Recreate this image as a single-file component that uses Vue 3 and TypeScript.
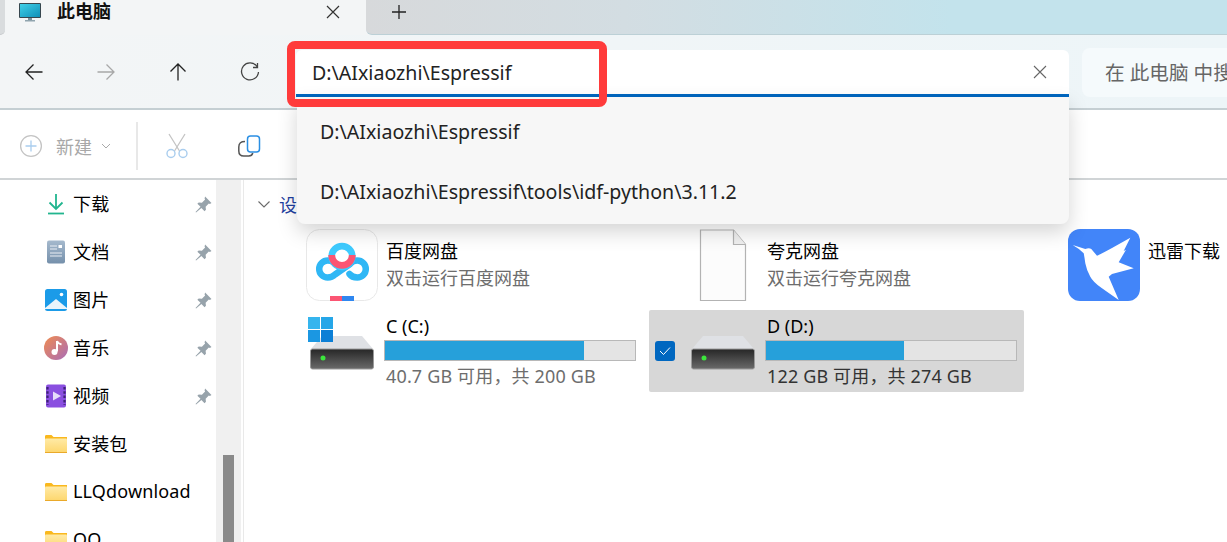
<template>
  <div class="window">
    <div class="tabstrip">
      <div class="tab-edge"></div>
      <div class="tab">
        <svg class="tab-icon" width="24" height="22" viewBox="0 0 24 22">
          <defs>
            <linearGradient id="screen" x1="0" y1="0" x2="1" y2="1">
              <stop offset="0" stop-color="#3fd0e8" />
              <stop offset="1" stop-color="#0f8fb8" />
            </linearGradient>
          </defs>
          <rect x="1" y="2" width="22" height="15" rx="1" fill="#37474f" />
          <rect x="2" y="3" width="20" height="13" fill="url(#screen)" />
          <rect x="10" y="17" width="4" height="2" fill="#78909c" />
          <rect x="7" y="19" width="10" height="1.5" fill="#90a4ae" />
        </svg>
        <span class="tab-title">此电脑</span>
        <svg class="tab-close" width="14" height="14" viewBox="0 0 14 14">
          <path d="M1 1l12 12M13 1L1 13" stroke="#333" stroke-width="1.2" fill="none" />
        </svg>
      </div>
      <div class="strip">
        <svg width="16" height="16" viewBox="0 0 16 16">
          <path d="M8 1v14M1 8h14" stroke="#222" stroke-width="1.3" fill="none" />
        </svg>
      </div>
    </div>

    <div class="navbar">
      <div class="nav-buttons">
        <button v-for="n in navIcons" :key="n.id" class="nav-btn">
          <svg width="20" height="20" viewBox="0 0 20 20">
            <path :d="n.d" :stroke="n.color" stroke-width="1.3" fill="none" />
          </svg>
        </button>
      </div>
      <div class="address">
        <span class="address-text">D:\AIxiaozhi\Espressif</span>
        <svg class="address-clear" width="14" height="14" viewBox="0 0 14 14">
          <path d="M1 1l12 12M13 1L1 13" stroke="#666" stroke-width="1.1" fill="none" />
        </svg>
      </div>
      <div class="search">在 此电脑 中搜索</div>
    </div>

    <div class="commands">
      <div class="cmd-new">
        <svg width="24" height="24" viewBox="0 0 24 24">
          <circle cx="12" cy="12" r="10.4" fill="none" stroke="#c4c4c4" stroke-width="1.3" />
          <path d="M12 6.5v11M6.5 12h11" stroke="#a9cdee" stroke-width="1.3" fill="none" />
        </svg>
        <span>新建</span>
        <svg width="10" height="6" viewBox="0 0 10 6">
          <path d="M1 1l4 4 4-4" stroke="#aaa" stroke-width="1" fill="none" />
        </svg>
      </div>
      <div class="cmd-sep"></div>
      <svg class="cmd-cut" width="24" height="26" viewBox="0 0 24 26">
        <path d="M4 1l10.500 17M20 1L9.500 18" stroke="#c4c4c4" stroke-width="1.300" fill="none" />
        <circle cx="6" cy="20.500" r="4" fill="none" stroke="#a9cdee" stroke-width="1.400" />
        <circle cx="18" cy="20.500" r="4" fill="none" stroke="#a9cdee" stroke-width="1.400" />
      </svg>
      <svg class="cmd-copy" width="24" height="24" viewBox="0 0 24 24">
        <path d="M7 7.500C3 7.500.8 9 .8 13v4c0 3 2 5 5 5h5c2 0 3.500-1 4-3" stroke="#555" stroke-width="1.500" fill="none" />
        <rect x="9.500" y="2" width="12" height="16" rx="3" fill="#fff" stroke="#2b8fe3" stroke-width="1.500" />
      </svg>
    </div>

    <div class="main">
      <aside class="sidebar">
        <ul class="tree">
          <li v-for="item in places" :key="item.label" class="tree-row">
            <svg class="tree-icon" width="24" height="24" viewBox="0 0 24 24">
              <defs>
                <linearGradient id="musicFill" x1="0" y1="0" x2="1" y2="1">
                  <stop offset="0" stop-color="#f08c50" />
                  <stop offset="1" stop-color="#a96cb8" />
                </linearGradient>
                <linearGradient id="docFill" x1="0" y1="0" x2="0" y2="1">
                  <stop offset="0" stop-color="#a5b9cd" />
                  <stop offset="1" stop-color="#7590ab" />
                </linearGradient>
                <linearGradient id="folderFill" x1="0" y1="0" x2="0" y2="1">
                  <stop offset="0" stop-color="#ffeaa6" />
                  <stop offset="1" stop-color="#fdd66c" />
                </linearGradient>
              </defs>
              <template v-if="item.kind === 'download'">
                <path d="M12 2v15M5.500 10.500l6.500 6.500 6.500-6.500" stroke="#22b58f" stroke-width="1.800" fill="none" />
                <path d="M4 21.500h16" stroke="#22b58f" stroke-width="1.800" />
              </template>
              <template v-else-if="item.kind === 'doc'">
                <rect x="3" y="0.500" width="18" height="23" rx="2" fill="url(#docFill)" />
                <path d="M6 6h7M6 9h7M6 13h12M6 16h12" stroke="#e9eef3" stroke-width="1.100" />
                <rect x="14.500" y="5" width="3.500" height="3" fill="#fff" />
              </template>
              <template v-else-if="item.kind === 'pic'">
                <rect x="1" y="1" width="22" height="22" rx="2.500" fill="#1b9be8" />
                <circle cx="17.500" cy="6.500" r="1.800" fill="#fff" />
                <path d="M1 20l11-9 11 9v1H1z" fill="#eaf4fb" />
              </template>
              <template v-else-if="item.kind === 'music'">
                <circle cx="12" cy="12" r="12" fill="url(#musicFill)" />
                <path d="M13 5v10.500" stroke="#fff" stroke-width="2" />
                <path d="M13 5c1 2.500 3 3 4.500 3.500" stroke="#fff" stroke-width="2" fill="none" />
                <circle cx="10.500" cy="16" r="3" fill="#fff" />
              </template>
              <template v-else-if="item.kind === 'video'">
                <rect x="2" y="0.500" width="20" height="23" rx="2" fill="#8a4fe0" />
                <path d="M9 7.500l8 4.500-8 4.500z" fill="#e6dcfa" />
                <path d="M3.500 3v18M20.500 3v18" stroke="#3e2277" stroke-width="2.200" stroke-dasharray="2.500 1.800" />
              </template>
              <template v-else>
                <path d="M1 4.500c0-1 .5-1.500 1.500-1.500h5l2 2h13.500v3H1z" fill="#f9b81e" />
                <rect x="1" y="6.500" width="22" height="14.500" rx="1" fill="url(#folderFill)" />
                <path d="M1 20.500h22" stroke="#eaa92a" stroke-width="1" />
              </template>
            </svg>
            <span class="tree-label">{{ item.label }}</span>
            <svg v-if="item.pinned" class="tree-pin" width="17" height="17" viewBox="0 0 16 16">
              <path d="M9.500 0.500l6 6-1.500 1-1-.5-3 3 .3 3-1.300 1.300-3-3L1 15.500l-.5-.5 4.700-4.800-3-3L3.500 6l3 .3 3-3-.5-1z" fill="#97a3ab" />
            </svg>
          </li>
        </ul>
        <div class="scrolltrack"><div class="scrollthumb"></div></div>
      </aside>

      <section class="content">
        <div class="group-head">
          <svg width="12" height="7" viewBox="0 0 12 7">
            <path d="M.5.500l5.500 5.500 5.500-5.500" stroke="#6a6a6a" stroke-width="1.100" fill="none" />
          </svg>
          <span class="group-title">设备和驱动器</span>
        </div>
        <div class="tiles">
          <div class="tile app">
            <svg class="app-icon" width="72" height="72" viewBox="0 0 72 72">
              <rect x="0.500" y="0.500" width="71" height="71" rx="13" fill="#fff" stroke="#e8e8e8" />
              <path d="M43.500 45Q46 48.500 51.300 48.500A8.500 8.500 0 0 0 51.300 31.500Q47 31.500 44 35L29 45.500Q26 48.500 21.700 48.500A8.500 8.500 0 0 1 21.700 31.500Q25 31.500 28 33.500" fill="none" stroke="#2fb7f5" stroke-width="6.500" stroke-linecap="round" />
              <circle cx="36" cy="27.500" r="10.300" fill="none" stroke="#3ecbff" stroke-width="6.700" />
              <path d="M25.700 26A10.300 10.300 0 0 0 46.300 26" fill="none" stroke="#fb5573" stroke-width="6.700" />
              <rect x="24" y="67" width="12" height="5" fill="#fb5573" />
              <rect x="36" y="67" width="12" height="5" fill="#2f87f0" />
            </svg>
            <div class="tile-text">
              <div class="tile-name">百度网盘</div>
              <div class="tile-sub">双击运行百度网盘</div>
            </div>
          </div>
          <div class="tile app">
            <svg class="app-icon" width="72" height="72" viewBox="0 0 72 72">
              <path d="M13.500 1h33l12 14.500v56h-45z" fill="#fcfcfc" stroke="#b3b3b3" stroke-width="1.200" />
              <path d="M46.500 1v14.500h12" fill="#f0f0f0" stroke="#b3b3b3" stroke-width="1.200" />
            </svg>
            <div class="tile-text">
              <div class="tile-name">夸克网盘</div>
              <div class="tile-sub">双击运行夸克网盘</div>
            </div>
          </div>
          <div class="tile app">
            <svg class="app-icon" width="72" height="72" viewBox="0 0 72 72">
              <rect width="72" height="72" rx="12" fill="#4285f9" />
              <path d="M4.700 16L17.300 20Q21 18.500 23.300 20L29 26.700Q35 24 44 19L62.300 8.700L55.700 22L58 20.700L50.700 33.300L65.700 39.300L44 45L40.700 47.700L50.700 71L34 59.300Q25 53 22.300 47.700Q18.500 41 17.300 34.300Q16.500 28 15.700 24.300Q11 19.500 4.700 16z" fill="#fff" />
            </svg>
            <div class="tile-text">
              <div class="tile-name">迅雷下载</div>
            </div>
          </div>

          <div v-for="d in drives" :key="d.label" class="tile drive" :class="{ selected: d.selected }">
            <span v-if="d.selected" class="check">
              <svg width="12" height="10" viewBox="0 0 12 10">
                <path d="M1 5l3.500 3.500L11 1.500" stroke="#fff" stroke-width="1" fill="none" />
              </svg>
            </span>
            <div class="drive-icon">
              <svg width="64" height="36" viewBox="0 0 64 36">
                <defs>
                  <linearGradient :id="'body' + d.label[0]" x1="0" y1="0" x2="0" y2="1">
                    <stop offset="0" stop-color="#262626" />
                    <stop offset="1" stop-color="#6a6a6a" />
                  </linearGradient>
                </defs>
                <path d="M12 1h40l11 13H1z" fill="#dfe1e5" />
                <rect x="0.500" y="14" width="63" height="20" rx="2" :fill="`url(#body${d.label[0]})`" stroke="#9a9a9a" />
                <circle cx="13" cy="23" r="2.500" fill="#3ce63c" />
              </svg>
              <svg v-if="d.system" class="win-logo" width="26" height="26" viewBox="0 0 26 26">
                <rect x="0" y="0" width="12" height="12" fill="#35b5ee" />
                <rect x="13" y="0" width="12" height="12" fill="#25a6e8" />
                <rect x="0" y="13" width="12" height="12" fill="#1b97e2" />
                <rect x="13" y="13" width="12" height="12" fill="#0c7fd6" />
              </svg>
            </div>
            <div class="drive-info">
              <div class="tile-name">{{ d.label }}</div>
              <div class="bar"><div class="bar-fill" :style="{ width: d.used + '%' }"></div></div>
              <div class="tile-sub">{{ d.free }}</div>
            </div>
          </div>
        </div>
      </section>
    </div>

    <!-- 地址栏下拉 -->
    <ul class="suggest">
      <li v-for="s in suggestions" :key="s">{{ s }}</li>
    </ul>
    <!-- 截图上的红框标注 -->
    <div class="mark"></div>
  </div>
</template>

<script setup lang="ts">
interface Place {
  label: string;
  kind: string;
  pinned?: boolean;
}

const navIcons = [
  { id: 'back', d: 'M18.500 10H2M9.500 2.500L2 10l7.500 7.500', color: '#222' },
  { id: 'forward', d: 'M1.500 10H18M10.500 2.500L18 10l-7.500 7.500', color: '#a8a8a8' },
  { id: 'up', d: 'M10 18.500V2M2.500 9.500L10 2l7.500 7.500', color: '#222' },
  { id: 'refresh', d: 'M17 4.500A8.500 8.500 0 1 0 18.500 10M17.500 1v4.500H13', color: '#444' },
];

const places: Place[] = [
  { label: '下载', kind: 'download', pinned: true },
  { label: '文档', kind: 'doc', pinned: true },
  { label: '图片', kind: 'pic', pinned: true },
  { label: '音乐', kind: 'music', pinned: true },
  { label: '视频', kind: 'video', pinned: true },
  { label: '安装包', kind: 'folder' },
  { label: 'LLQdownload', kind: 'folder' },
  { label: 'QQ', kind: 'folder' },
];

const drives = [
  { label: 'C (C:)', used: 79.6, free: '40.7 GB 可用，共 200 GB', system: true, selected: false },
  { label: 'D (D:)', used: 55, free: '122 GB 可用，共 274 GB', system: false, selected: true },
];

const suggestions = [
  'D:\\AIxiaozhi\\Espressif',
  'D:\\AIxiaozhi\\Espressif\\tools\\idf-python\\3.11.2',
];
</script>

<style>
html, body {
  margin: 0;
  overflow: hidden;
}
</style>

<style scoped>
.window {
  position: relative;
  width: 1227px;
  height: 542px;
  overflow: hidden;
  background: #fff;
  font-family: "Noto Sans", "Noto Sans CJK SC", sans-serif;
  font-size: 18px;
  color: #111;
}

.tabstrip {
  display: flex;
  height: 35px;
  background: #f3f5f6;
}

.tab-edge {
  width: 5px;
  background: #d9dcde;
  border-bottom: 1px solid #c6cacc;
  border-radius: 0 0 6px 0;
  box-sizing: border-box;
}

.tab {
  display: flex;
  align-items: center;
  width: 361px;
  flex-shrink: 0;
  box-sizing: border-box;
  padding: 0 26px 11px 13px;
}

.tab-icon {
  flex-shrink: 0;
}

.tab-title {
  margin-left: 15px;
  font-weight: 700;
  font-size: 18px;
  line-height: 24px;
  flex: 1;
  padding-bottom: 2px;
}

.strip {
  flex: 1;
  display: flex;
  align-items: center;
  padding: 0 0 11px 25px;
  box-sizing: border-box;
  background: linear-gradient(90deg, #d7d9db 0%, #d3dde2 30%, #c3e3ec 68%, #c3e3ec 100%);
  border-bottom: 1px solid #bcd0d6;
  border-radius: 0 0 0 6px;
}

.navbar {
  display: flex;
  align-items: center;
  height: 75px;
  padding: 4px 0 0 8px;
  box-sizing: border-box;
  background: linear-gradient(90deg, #f3f5f6 0%, #edf5f8 100%);
  border-bottom: 2px solid #c5cfd3;
}

.nav-buttons {
  display: flex;
  width: 288px;
  flex-shrink: 0;
  margin-bottom: 3px;
}

.nav-btn {
  width: 72px;
  height: 40px;
  padding: 0;
  padding-left: 16px;
  border: none;
  background: none;
  display: flex;
  align-items: center;
  justify-content: flex-start;
}

.address {
  width: 773px;
  height: 47px;
  display: flex;
  align-items: center;
  justify-content: space-between;
  background: #fff;
  border-radius: 6px 6px 0 0;
  border-bottom: 3px solid #0067c0;
  box-sizing: border-box;
  padding: 0 22px 0 16px;
  font-size: 19.6px;
  color: #222;
}

.search {
  flex: 1;
  margin: 0 0 2px 13px;
  height: 49px;
  line-height: 49px;
  font-size: 19.6px;
  background: #f5fafc;
  border-radius: 8px 0 0 8px;
  padding-left: 23px;
  color: #666;
  white-space: nowrap;
  overflow: hidden;
}

.commands {
  display: flex;
  align-items: center;
  height: 70px;
  padding: 3px 0 0 19px;
  box-sizing: border-box;
  background: #fff;
  border-bottom: 2px solid #d0d4d6;
}

.cmd-new {
  display: flex;
  align-items: center;
  color: #a8a8a8;
  width: 117px;
}

.cmd-new span {
  margin: 0 9px 0 13px;
}

.cmd-sep {
  width: 2px;
  height: 48px;
  background: #e8e8e8;
}

.cmd-cut {
  margin-left: 27px;
}

.cmd-copy {
  margin-left: 49px;
}

.main {
  display: flex;
  height: 362px;
}

.sidebar {
  display: flex;
  width: 244px;
  flex-shrink: 0;
  border-right: 1px solid #e9e9e9;
  box-sizing: border-box;
}

.tree {
  list-style: none;
  margin: 0;
  padding: 0;
  width: 216px;
  flex-shrink: 0;
  overflow: hidden;
}

.tree-row {
  display: flex;
  align-items: center;
  height: 48px;
  padding-left: 44px;
  box-sizing: border-box;
}

.tree-label {
  margin-left: 5px;
  padding-bottom: 2px;
  flex: 1;
  color: #000;
  letter-spacing: 0.15px;
  white-space: nowrap;
}

.tree-pin {
  margin-right: 4px;
}

.scrolltrack {
  width: 25px;
  background: #f0f0f0;
  padding: 275px 7px 0;
  box-sizing: border-box;
}

.scrollthumb {
  height: 100%;
  background: #8a8a8a;
}

.content {
  flex: 1;
  min-width: 0;
}

.group-head {
  display: flex;
  align-items: center;
  height: 48px;
  padding-left: 14px;
}

.group-title {
  margin-left: 9px;
  color: #1f3fa0;
  white-space: nowrap;
}

.tiles {
  display: grid;
  grid-template-columns: repeat(3, 375px);
  grid-template-rows: 76px 82px;
  column-gap: 6px;
  row-gap: 6px;
  padding-left: 24px;
}

.tile {
  display: flex;
  align-items: center;
  min-width: 0;
}

.app {
  align-items: flex-start;
  padding: 1px 0 0 38px;
  box-sizing: border-box;
}

.app-icon {
  flex-shrink: 0;
}

.tile-text {
  margin-left: 8px;
  padding-top: 9px;
  white-space: nowrap;
}

.tile-name {
  line-height: 27px;
  color: #000;
  white-space: nowrap;
}

.tile-sub {
  line-height: 27px;
  color: #6d6d6d;
  white-space: nowrap;
}

.drive {
  position: relative;
  padding-left: 42px;
  box-sizing: border-box;
  border-radius: 2px;
}

.drive.selected {
  background: #d7d7d7;
}

.drive.selected .tile-sub {
  color: #333;
}

.check {
  position: absolute;
  left: 6px;
  top: 31px;
  width: 20px;
  height: 20px;
  border-radius: 3px;
  background: #0067c0;
  display: flex;
  align-items: center;
  justify-content: center;
}

.drive-icon {
  position: relative;
  width: 64px;
  height: 36px;
  flex-shrink: 0;
  margin-top: 4px;
}

.win-logo {
  position: absolute;
  left: -2px;
  top: -18px;
}

.drive-info {
  align-self: flex-start;
  margin: 3px 0 0 10px;
  width: 252px;
  flex-shrink: 0;
}

.drive-info .tile-name {
  line-height: 27px;
  padding-left: 2px;
}

.drive-info .tile-sub {
  padding-left: 2px;
  line-height: 30px;
  letter-spacing: 0.15px;
}

.bar {
  height: 21px;
  box-sizing: border-box;
  background: #e4e4e4;
  border: 1px solid #b8b8b8;
}

.bar-fill {
  height: 100%;
  background: #26a0da;
}

.suggest {
  position: absolute;
  left: 297px;
  top: 97px;
  width: 772px;
  height: 127px;
  margin: 0;
  padding: 5px 0 0;
  box-sizing: border-box;
  list-style: none;
  font-size: 19.6px;
  background: #f7f7f7;
  border-radius: 0 0 8px 8px;
  box-shadow: 0 8px 20px rgba(0, 0, 0, 0.17);
}

.suggest li {
  height: 60px;
  line-height: 60px;
  padding-left: 23px;
  color: #222;
}

.mark {
  position: absolute;
  left: 287px;
  top: 41px;
  width: 320px;
  height: 66px;
  box-sizing: border-box;
  border: 8px solid #ff3b3b;
  border-radius: 8px;
}
</style>
